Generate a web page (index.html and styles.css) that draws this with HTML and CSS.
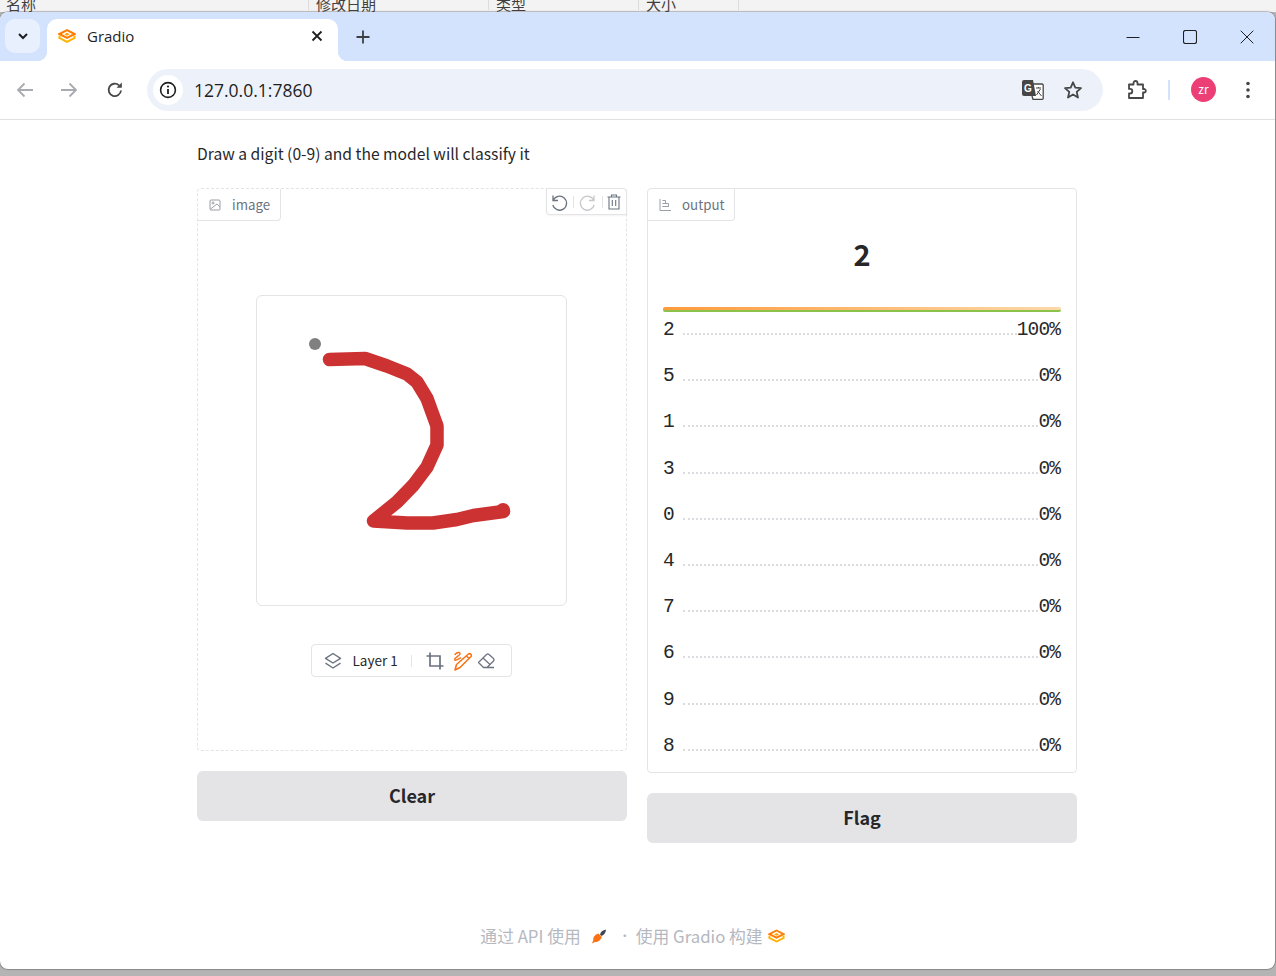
FILE: index.html
```html
<!DOCTYPE html>
<html lang="en">
<head>
    <meta charset="UTF-8">
    <link rel="stylesheet" href="styles.css">
    <title>Gradio</title>
</head>
<body>
<svg class="defs" width="0" height="0">
    <symbol id="logo" viewBox="0 0 18 14">
        <path d="M9 1.200 16.600 5 9 8.800 1.400 5Z" fill="none" stroke="#ff7c00" stroke-width="2"/>
        <path d="M1.600 6.600 1.400 9 9 12.800 16.600 9 16.400 6.600" fill="none" stroke="#ffb300" stroke-width="2"/>
        <path d="M9 3.800 11.600 5.300 9 6.800 6.400 5.300Z" fill="#ffa200"/>
    </symbol>
</svg>

<div class="explorer">
    <span class="col col-name">名称</span>
    <span class="col col-date">修改日期</span>
    <span class="col col-type">类型</span>
    <span class="col col-size">大小</span>
</div>

<div class="window">
    <div class="tabstrip">
        <div class="tabsearch">
            <svg width="12" height="12" viewBox="0 0 12 12"><path d="M2 4l4 4 4-4" fill="none" stroke="#1f1f1f" stroke-width="2"/></svg>
        </div>
        <div class="tab">
            <svg class="tab-logo" width="18" height="14"><use href="#logo"/></svg>
            <span class="tab-title">Gradio</span>
            <svg class="tab-close" width="12" height="12" viewBox="0 0 12 12"><path d="M1.500 1.500l9 9M10.500 1.500l-9 9" stroke="#1f1f1f" stroke-width="1.800"/></svg>
        </div>
        <svg class="newtab" width="14" height="14" viewBox="0 0 14 14"><path d="M7 0.500v13M0.500 7h13" stroke="#3c4043" stroke-width="1.800"/></svg>
        <div class="winbtns">
            <svg width="14" height="14" viewBox="0 0 14 14"><path d="M0.500 7.500h13" stroke="#1f1f1f" stroke-width="1"/></svg>
            <svg width="14" height="14" viewBox="0 0 14 14"><rect x="0.500" y="0.500" width="13" height="13" rx="2" fill="none" stroke="#1f1f1f" stroke-width="1.100"/></svg>
            <svg width="14" height="14" viewBox="0 0 14 14"><path d="M0.700 0.700l12.600 12.600M13.300 0.700 0.700 13.300" stroke="#1f1f1f" stroke-width="1"/></svg>
        </div>
    </div>

    <div class="toolbar">
        <svg class="nav nav-back" width="18" height="16" viewBox="0 0 18 16"><path d="M17 8H2M8.500 1.500 2 8l6.500 6.500" fill="none" stroke="#a8abaf" stroke-width="1.800"/></svg>
        <svg class="nav nav-fwd" width="18" height="16" viewBox="0 0 18 16"><path d="M1 8h15M9.500 1.500 16 8l-6.500 6.500" fill="none" stroke="#a8abaf" stroke-width="1.800"/></svg>
        <svg class="nav nav-reload" width="18" height="18" viewBox="0 0 18 18"><path d="M15 9.500A6.200 6.200 0 1 1 13 4.300" fill="none" stroke="#474747" stroke-width="1.800"/><path d="M15.800 1.500v5.300h-5.300z" fill="#474747"/></svg>
        <div class="omnibox">
            <div class="siteinfo">
                <svg width="18" height="18" viewBox="0 0 18 18"><circle cx="9" cy="9" r="7.400" fill="none" stroke="#1f1f1f" stroke-width="1.600"/><path d="M9 8v5" stroke="#1f1f1f" stroke-width="1.800"/><circle cx="9" cy="5.500" r="1.100" fill="#1f1f1f"/></svg>
            </div>
            <span class="url">127.0.0.1:7860</span>
            <svg class="omni-translate" width="22" height="20" viewBox="0 0 22 20"><path d="M8 4H11l3 0h6a1.200 1.200 0 0 1 1.200 1.200v13a1.200 1.200 0 0 1-1.200 1.200H11L10 16" fill="#fff" stroke="#474747" stroke-width="1.300"/><path d="M2 0h9l3 16H2a2 2 0 0 1-2-2V2a2 2 0 0 1 2-2z" fill="#474747"/><text x="2" y="11.500" class="g-mark">G</text><path d="M14 8h5M16.500 7v1M14.500 15l4-6M15.500 11l4 5" fill="none" stroke="#474747" stroke-width="1"/></svg>
            <svg class="omni-star" width="20" height="20" viewBox="0 0 20 20"><path d="M10 2.300l2.300 5.300 5.700.5-4.300 3.800 1.300 5.600-5-3-5 3 1.300-5.600L2 8.100l5.700-.5z" fill="none" stroke="#474747" stroke-width="1.800" stroke-linejoin="round"/></svg>
        </div>
        <svg class="ext" width="20" height="20" viewBox="0 0 20 20"><path d="M2 4.500h4.500V3a2 2 0 0 1 4 0v1.500H16v4.500h1.500a1.800 1.800 0 0 1 0 3.500H16V18H2v-4.500h1a2.300 2.300 0 0 0 0-4.600H2z" fill="none" stroke="#474747" stroke-width="1.800" stroke-linejoin="round"/></svg>
        <span class="tool-sep"></span>
        <span class="avatar">zr</span>
        <svg class="kebab" width="4" height="18" viewBox="0 0 4 18"><circle cx="2" cy="2.500" r="1.800" fill="#474747"/><circle cx="2" cy="9" r="1.800" fill="#474747"/><circle cx="2" cy="15.500" r="1.800" fill="#474747"/></svg>
    </div>

    <main class="page">
        <p class="desc">Draw a digit (0-9) and the model will classify it</p>
        <div class="columns">
            <div class="column">
                <div class="panel panel-image">
                    <div class="block-label">
                        <svg width="14" height="14" viewBox="0 0 14 14"><rect x="2" y="2" width="10" height="10" rx="1" fill="none" stroke="#9a9ea6"/><circle cx="5" cy="5" r="1" fill="none" stroke="#9a9ea6"/><path d="M2.500 11 9 6l3 3" fill="none" stroke="#9a9ea6"/></svg>
                        <span>image</span>
                    </div>
                    <div class="history">
                        <svg width="18" height="18" viewBox="0 0 18 18"><path d="M3 2.500V7.500H8M3.200 7.300A7 7 0 1 1 2.800 12" fill="none" stroke="#6b7280" stroke-width="1.300"/></svg>
                        <span class="history-sep"></span>
                        <svg width="18" height="18" viewBox="0 0 18 18"><path d="M15 2.500V7.500H10M14.800 7.300A7 7 0 1 0 15.200 12" fill="none" stroke="#c6c8cc" stroke-width="1.300"/></svg>
                        <span class="history-sep history-sep-last"></span>
                        <svg width="16" height="16" viewBox="0 0 16 16"><path d="M1.500 3h13M5.500 3V1h5v2M3 3v12h10V3M6.300 6v6M9.700 6v6" fill="none" stroke="#6b7280" stroke-width="1.100"/></svg>
                    </div>
                    <div class="canvas">
                        <svg width="309" height="309" viewBox="0 0 309 309">
                            <circle cx="58" cy="48" r="6" fill="#808080"/>
                            <path d="M72.500 63.500 108 62.500 130 70 150 78 160 86 170 102.500 180 130V149L170 171 156.500 189 140 206 116.500 225 150 227H176L200 223.500 216.500 219.500 246.500 215.500" fill="none" stroke="#cc3232" stroke-width="13.500" stroke-linecap="round" stroke-linejoin="round"/>
                            <circle cx="246" cy="214" r="7" fill="#cc3232"/>
                        </svg>
                    </div>
                    <div class="layerbar">
                        <svg width="20" height="20" viewBox="0 0 20 20"><path d="M10 2.500 17.500 7.300 10 12 2.500 7.300Z M2.500 12.200 10 17l7.500-4.800" fill="none" stroke="#6b7280" stroke-width="1.400" stroke-linejoin="round"/></svg>
                        <span class="layername">Layer 1</span>
                        <span class="layer-sep"></span>
                        <svg width="20" height="20" viewBox="0 0 20 20"><path d="M1.500 5h13.500V18.500M5 1.500V15H18.500" fill="none" stroke="#6b7280" stroke-width="1.700"/></svg>
                        <svg class="tool-pen" width="20" height="20" viewBox="0 0 20 20"><path d="M16.500 3a1.800 1.800 0 0 1 2.500 2.500L8 16.500 3 19l1.500-5.500ZM14.500 5l2.500 2.500" fill="none" stroke="#f97316" stroke-width="1.600" stroke-linejoin="round"/><path d="M3 3.500C5 1 8.500 1 8 3S2.500 6.500 2.500 8.500 7 7.500 8.500 7" fill="none" stroke="#f97316" stroke-width="1.400" stroke-linecap="round"/></svg>
                        <svg class="tool-eraser" width="20" height="20" viewBox="0 0 20 20"><path d="M2.500 11.500 10.500 3.500a1.800 1.800 0 0 1 2.500 0l4.500 4a1.800 1.800 0 0 1 0 2.500L11 16.500H7.500zM7 7l6.500 6M7.500 16.500H18" fill="none" stroke="#6b7280" stroke-width="1.300" stroke-linejoin="round"/></svg>
                    </div>
                </div>
                <button type="button" class="btn">Clear</button>
            </div>

            <div class="column">
                <div class="panel panel-output">
                    <div class="block-label">
                        <svg width="14" height="14" viewBox="0 0 14 14"><path d="M2 1v11.500h11M4.500 2.500h3v3h-3M4.500 5.500h6v3h-6M4.500 8.500h6" fill="none" stroke="#9a9ea6"/></svg>
                        <span>output</span>
                    </div>
                    <div class="big-label">2</div>
                    <div class="confidence-bar"></div>
                    <div class="row"><span>2</span><i></i><span>100%</span></div>
                    <div class="row"><span>5</span><i></i><span>0%</span></div>
                    <div class="row"><span>1</span><i></i><span>0%</span></div>
                    <div class="row"><span>3</span><i></i><span>0%</span></div>
                    <div class="row"><span>0</span><i></i><span>0%</span></div>
                    <div class="row"><span>4</span><i></i><span>0%</span></div>
                    <div class="row"><span>7</span><i></i><span>0%</span></div>
                    <div class="row"><span>6</span><i></i><span>0%</span></div>
                    <div class="row"><span>9</span><i></i><span>0%</span></div>
                    <div class="row"><span>8</span><i></i><span>0%</span></div>
                </div>
                <button type="button" class="btn">Flag</button>
            </div>
        </div>
        <footer class="foot">
            <span>通过 API 使用</span>
            <svg class="rocket" width="16" height="16" viewBox="0 0 16 16"><path d="M9 6.500C9.500 4 11.500 2 15 1.500 14.800 5 13 7 10.500 8Z" fill="#3f4656"/><path d="M7.500 5.500 11 9 9.500 11.500C8 13.500 6 14 4 14L1 15.500 2.300 12C2 10 3 8 5 6.500Z" fill="#f97316"/></svg>
            <span class="foot-dot">·</span>
            <span>使用 Gradio 构建</span>
            <svg class="foot-logo" width="17" height="14"><use href="#logo"/></svg>
        </footer>
    </main>
</div>
</body>
</html>
```

FILE: styles.css
```css
body{
    margin: 0;
    padding: 0;
    height: 976px;
    overflow: hidden;
    background: #b4b4b4;
    font-family: "Noto Sans CJK SC", "Noto Sans", sans-serif;
}
.defs{
    display: block;
    height: 0;
}

/* desktop window behind the browser */
.explorer{
    display: flex;
    height: 12px;
    overflow: hidden;
    background: #f3f3f3;
    color: #3f3f3f;
    font-size: 15px;
    line-height: 12px;
}
.col{
    box-sizing: border-box;
    height: 12px;
    padding-left: 7px;
    border-right: 1px solid #dcdcdc;
    margin-top: -2px;
}
.col-name{ width: 309px; padding-left: 6px; }
.col-date{ width: 180px; }
.col-type{ width: 150px; }
.col-size{ width: 100px; }

.window{
    width: 1275px;
    height: 957px;
    display: flex;
    flex-direction: column;
    background: #fff;
    border-radius: 8px;
    overflow: hidden;
    box-shadow: 0 0 1px 1px rgba(0,0,0,0.25);
}

/* tab strip */
.tabstrip{
    height: 49px;
    flex: none;
    display: flex;
    align-items: flex-start;
    background: #d3e3fd;
}
.tabsearch{
    width: 35px;
    height: 34px;
    margin: 7px 0 0 5px;
    border-radius: 10px;
    background: #e8f0fe;
    display: flex;
    align-items: center;
    justify-content: center;
}
.tab{
    position: relative;
    width: 291px;
    height: 42px;
    margin: 7px 0 0 7px;
    background: #fff;
    border-radius: 10px 10px 0 0;
    display: flex;
    align-items: center;
    padding-bottom: 8px;
    box-sizing: border-box;
}
.tab::before,
.tab::after{
    content: "";
    position: absolute;
    bottom: 0;
    width: 10px;
    height: 10px;
}
.tab::before{
    left: -10px;
    background: radial-gradient(circle at 0 0, transparent 10px, #fff 10.5px);
}
.tab::after{
    right: -10px;
    background: radial-gradient(circle at 100% 0, transparent 10px, #fff 10.5px);
}
.tab-logo{
    margin-left: 11px;
}
.tab-title{
    margin-left: 11px;
    flex: 1;
    font-family: "Open Sans", sans-serif;
    font-size: 15px;
    color: #1f1f1f;
}
.tab-close{
    margin-right: 15px;
}
.newtab{
    margin: 18px 0 0 18px;
}
.winbtns{
    margin-left: auto;
    display: flex;
    gap: 43px;
    padding: 18px 21px 0 0;
}

/* toolbar */
.toolbar{
    height: 59px;
    flex: none;
    display: flex;
    align-items: center;
    box-sizing: border-box;
    border-bottom: 1px solid #e0e0e0;
    padding: 0 0 1px 16px;
}
.nav-fwd{
    margin-left: 26px;
}
.nav-reload{
    margin-left: 28px;
}
.omnibox{
    width: 956px;
    height: 42px;
    margin-left: 23px;
    border-radius: 21px;
    background: #edf2fa;
    display: flex;
    align-items: center;
    padding: 0 20px 0 6px;
    box-sizing: border-box;
}
.siteinfo{
    width: 30px;
    height: 30px;
    border-radius: 50%;
    background: #fff;
    display: flex;
    align-items: center;
    justify-content: center;
}
.url{
    margin-left: 11px;
    flex: 1;
    font-family: "Open Sans", sans-serif;
    font-size: 17.5px;
    color: #1f1f1f;
}
.g-mark{
    font-family: "Liberation Sans", sans-serif;
    font-size: 10px;
    font-weight: 700;
    fill: #fff;
}
.omni-star{
    margin-left: 19px;
}
.ext{
    margin-left: 24px;
}
.tool-sep{
    width: 2px;
    height: 20px;
    margin-left: 21px;
    background: #d3e3fd;
}
.avatar{
    width: 25px;
    height: 25px;
    margin-left: 21px;
    border-radius: 50%;
    background: #ec3f76;
    color: #fff;
    font-size: 12px;
    line-height: 24px;
    text-align: center;
}
.kebab{
    margin-left: 30px;
}

/* gradio page */
.page{
    flex: 1;
    box-sizing: border-box;
    width: 880px;
    margin-left: 197px;
    display: flex;
    flex-direction: column;
}
.desc{
    margin: 22px 0 0;
    font-size: 15.65px;
    line-height: 24px;
    color: #27272a;
}
.columns{
    display: flex;
    align-items: flex-start;
    gap: 20px;
    margin-top: 22px;
}
.column{
    width: 430px;
    display: flex;
    flex-direction: column;
    gap: 20px;
}
.panel{
    position: relative;
    box-sizing: border-box;
    border: 1px solid #e4e4e7;
    border-radius: 4px;
    background: #fff;
}
.panel-image{
    height: 563px;
    border-style: dashed;
    padding: 106px 2px 0 0;
    display: flex;
    flex-direction: column;
    align-items: center;
}
.panel-output{
    height: 585px;
    padding: 0 15px;
}
.block-label{
    position: absolute;
    left: 0;
    top: 0;
    height: 32px;
    box-sizing: border-box;
    padding: 0 10px;
    display: flex;
    align-items: center;
    gap: 10px;
    border-right: 1px solid #e4e4e7;
    border-bottom: 1px solid #e4e4e7;
    border-radius: 0 0 4px 0;
    font-size: 13.3px;
    color: #6b7280;
}
.history{
    position: absolute;
    right: -1px;
    top: -1px;
    width: 81px;
    height: 27px;
    box-sizing: border-box;
    display: flex;
    align-items: center;
    gap: 5px;
    padding-left: 3px;
    background: #fff;
    border: 1px solid #e4e4e7;
    border-radius: 0 4px 0 4px;
    box-shadow: 0 1px 2px rgba(0,0,0,0.05);
}
.history-sep{
    width: 1px;
    height: 12px;
    background: #e4e4e7;
}
.history-sep-last{
    margin-right: -2px;
}
.canvas{
    width: 311px;
    height: 311px;
    box-sizing: border-box;
    border: 1px solid #e4e4e7;
    border-radius: 6px;
    flex: none;
}
.canvas svg{
    display: block;
}
.layerbar{
    width: 201px;
    height: 33px;
    margin-top: 38px;
    box-sizing: border-box;
    border: 1px solid #e4e4e7;
    border-radius: 4px;
    display: flex;
    align-items: center;
    padding-left: 11px;
}
.layername{
    margin-left: 10px;
    padding-bottom: 1px;
    font-size: 13.5px;
    color: #27272a;
}
.layer-sep{
    width: 1px;
    height: 12px;
    margin: 0 13px 0 13px;
    background: #e4e4e7;
}
.tool-pen{
    margin-left: 7px;
}
.tool-eraser{
    margin-left: 4px;
}
.big-label{
    margin-top: 43px;
    text-align: center;
    font-size: 29px;
    font-weight: 600;
    line-height: 42px;
    color: #27272a;
}
.confidence-bar{
    height: 5px;
    margin-top: 33px;
    border-bottom: 2px solid #8bc34a;
    box-sizing: border-box;
    border-radius: 2px;
    background: linear-gradient(to right, #ff9a3c, #fdd9a8);
}
.row{
    display: flex;
    align-items: flex-end;
    height: 46.2px;
    font-family: "Liberation Mono", monospace;
    font-size: 19.5px;
    letter-spacing: -0.9px;
    line-height: 24px;
    color: #27272a;
}
.row span:last-child{
    margin-right: 1px;
}
.confidence-bar + .row{
    height: 30px;
}
.row i{
    flex: 1;
    margin: 0 0 7px 9px;
    border-bottom: 2px dotted #dcdce0;
}

.btn{
    display: block;
    width: 100%;
    height: 50px;
    border: 0;
    border-radius: 6px;
    padding-bottom: 4px;
    background: #e4e4e7;
    color: #27272a;
    font-family: inherit;
    font-size: 18px;
    font-weight: 600;
}

.foot{
    margin-top: auto;
    margin-bottom: 21px;
    padding-right: 9px;
    display: flex;
    align-items: center;
    justify-content: center;
    font-size: 16.8px;
    line-height: 24px;
    color: #b5b8bf;
}
.rocket{
    margin-left: 10px;
}
.foot-dot{
    margin: 0 5px 0 12px;
    font-size: 12px;
}
.foot-logo{
    margin-left: 5px;
}
```
